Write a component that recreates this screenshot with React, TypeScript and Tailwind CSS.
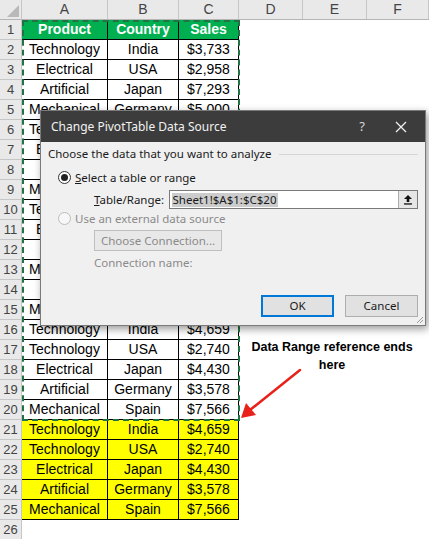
import React from "react";

const COLS = ["A", "B", "C", "D", "E", "F"];

type Row = [string, string, string];

// rows 6-15 sit behind the dialog; only their column A peeks out
const rows: Row[] = [
  ["Technology", "India", "$3,733"],
  ["Electrical", "USA", "$2,958"],
  ["Artificial", "Japan", "$7,293"],
  ["Mechanical", "Germany", "$5,000"],
  ["Technology", "", ""],
  ["Electrical", "", ""],
  ["Artificial", "", ""],
  ["Mechanical", "", ""],
  ["Technology", "", ""],
  ["Electrical", "", ""],
  ["Artificial", "", ""],
  ["Mechanical", "", ""],
  ["Artificial", "", ""],
  ["Mechanical", "", ""],
  ["Technology", "India", "$4,659"],
  ["Technology", "USA", "$2,740"],
  ["Electrical", "Japan", "$4,430"],
  ["Artificial", "Germany", "$3,578"],
  ["Mechanical", "Spain", "$7,566"],
];

const extra: Row[] = [
  ["Technology", "India", "$4,659"],
  ["Technology", "USA", "$2,740"],
  ["Electrical", "Japan", "$4,430"],
  ["Artificial", "Germany", "$3,578"],
  ["Mechanical", "Spain", "$7,566"],
];

const widths = ["w-[86px]", "w-[71px]", "w-[60px]", "w-[64px]", "w-[64px]", "w-[62px]"];

function RowNum({ n }: { n: number }) {
  return (
    <div className="w-[22px] shrink-0 h-full bg-[#e9e9e9] border-r border-b border-[#c6c6c6] flex items-center justify-center text-[13px] text-[#444]">
      {n}
    </div>
  );
}

function DataRow({ n, cells, tone }: { n: number; cells: Row; tone: "white" | "green" | "yellow" }) {
  const bg = tone === "green" ? "bg-[#00b050] text-white font-bold" : tone === "yellow" ? "bg-[#ffff00] text-black" : "bg-white text-black";
  return (
    <div className="flex h-[20px]">
      <RowNum n={n} />
      {cells.map((c, i) => (
        <div
          key={i}
          className={`${widths[i]} shrink-0 h-full border-r border-b border-black flex items-center justify-center whitespace-nowrap overflow-hidden ${bg}`}
        >
          {c}
        </div>
      ))}
      <div className="flex-1 bg-white" />
    </div>
  );
}

function Dialog() {
  return (
    <div className="absolute left-[40px] top-[110px] w-[386px] h-[216px] bg-[#f0f0f0] border border-[#7a7a7a] shadow-[2px_3px_8px_rgba(0,0,0,0.4)] flex flex-col text-[11.5px] text-[#1a1a1a] font-['Noto_Sans','Open_Sans',sans-serif]">
      <div className="h-[31px] bg-[#3c3c3c] flex items-center pl-[10px] text-[#f2f2f2] text-[12px]">
        <span className="flex-1">Change PivotTable Data Source</span>
        <span className="w-[20px] text-center text-[#d8d8d8] text-[13px] mr-[22px]">?</span>
        <svg width="14" height="14" viewBox="0 0 14 14" className="mr-[17px]">
          <path d="M2 2 L12 12 M12 2 L2 12" stroke="#f0f0f0" strokeWidth="1.3" />
        </svg>
      </div>
      <div className="flex-1 flex flex-col px-[7px] pt-[2px]">
        <div className="flex items-center h-[20px]">
          <span>Choose the data that you want to analyze</span>
          <div className="flex-1 h-px bg-[#d5d5d5] ml-[8px]" />
        </div>
        <div className="flex items-center h-[17px] mt-[5px] pl-[10px]">
          <span className="w-[13px] h-[13px] rounded-full border border-[#333] bg-white flex items-center justify-center">
            <span className="w-[7px] h-[7px] rounded-full bg-[#222]" />
          </span>
          <span className="ml-[4px]">
            <span className="underline">S</span>elect a table or range
          </span>
        </div>
        <div className="flex items-center h-[19px] mt-[4px] pl-[46px]">
          <span className="w-[75px]">
            <span className="underline">T</span>able/Range:
          </span>
          <div className="w-[251px] h-[19px] flex border border-[#7a7a7a] bg-white">
            <div className="flex-1 flex items-center pl-[2px]">
              <span className="bg-[#cccccc] leading-[14px] px-[1px]">Sheet1!$A$1:$C$20</span>
            </div>
            <div className="w-[19px] h-full bg-[#e6e6e6] border-l border-[#adadad] flex items-center justify-center">
              <svg width="10" height="11" viewBox="0 0 10 11">
                <path d="M5 1 L9 5 H6.3 V8 H3.7 V5 H1 Z" fill="#111" />
                <rect x="1" y="9.3" width="8" height="1.3" fill="#111" />
              </svg>
            </div>
          </div>
        </div>
        <div className="flex items-center h-[17px] mt-[1px] pl-[10px] text-[#8a8a8a]">
          <span className="w-[13px] h-[13px] rounded-full border border-[#bcbcbc] bg-[#f7f7f7]" />
          <span className="ml-[4px]">Use an external data source</span>
        </div>
        <div className="ml-[46px] mt-[3px] w-[128px] h-[21px] border border-[#bfbfbf] bg-[#e8e8e8] flex items-center justify-center text-[#8a8a8a]">
          Choose Connection...
        </div>
        <div className="ml-[46px] mt-[3px] h-[17px] flex items-center text-[#8a8a8a]">Connection name:</div>
        <div className="flex justify-end gap-[11px] mt-[24px]">
          <div className="w-[73px] h-[22px] border-2 border-[#0078d7] bg-[#e1e1e1] flex items-center justify-center">OK</div>
          <div className="w-[73px] h-[22px] border border-[#adadad] bg-[#e1e1e1] flex items-center justify-center">Cancel</div>
        </div>
      </div>
      <svg width="8" height="8" viewBox="0 0 8 8" className="absolute right-[1px] bottom-[1px]">
        <path d="M7 1 L1 7 M7 4 L4 7" stroke="#9a9a9a" strokeWidth="1" />
      </svg>
    </div>
  );
}

export default function App() {
  return (
    <div className="relative w-[429px] h-[539px] overflow-hidden bg-white font-['Liberation_Sans',Arial,sans-serif] text-[14px]">
      <div className="flex h-[20px] bg-[#e9e9e9] border-b border-[#b5b5b5] text-[14px] text-[#444]">
        <div className="w-[22px] shrink-0 h-full border-r border-[#c6c6c6] relative">
          <svg width="12" height="12" viewBox="0 0 12 12" className="absolute right-[2px] bottom-[2px]">
            <path d="M12 0 L12 12 L0 12 Z" fill="#b9b9b9" />
          </svg>
        </div>
        {COLS.map((c, i) => (
          <div key={c} className={`${widths[i]} shrink-0 h-full border-r border-[#c6c6c6] flex items-center justify-center`}>
            {c}
          </div>
        ))}
      </div>

      <DataRow n={1} cells={["Product", "Country", "Sales"]} tone="green" />
      {rows.map((r, i) => (
        <DataRow key={i} n={i + 2} cells={r} tone="white" />
      ))}
      {extra.map((r, i) => (
        <DataRow key={`y${i}`} n={i + 21} cells={r} tone="yellow" />
      ))}
      <div className="flex h-[20px]">
        <RowNum n={26} />
        <div className="flex-1 bg-white" />
      </div>

      {/* copy range marquee */}
      <div className="absolute left-[22px] top-[20px] w-[218px] h-[401px] border-2 border-dashed border-[#217346] pointer-events-none" />

      <Dialog />

      <div className="absolute left-[244px] top-[338px] w-[176px] text-center text-[12.5px] leading-[18px] font-bold text-black">
        Data Range reference ends
        <br />
        here
      </div>
      <svg width="70" height="60" viewBox="0 0 70 60" className="absolute left-[236px] top-[364px]">
        <path d="M64 6 L14 46" stroke="#e8221b" strokeWidth="2.5" strokeLinecap="round" />
        <path d="M5 54 L10 39 L20 51 Z" fill="#e8221b" />
      </svg>
    </div>
  );
}
